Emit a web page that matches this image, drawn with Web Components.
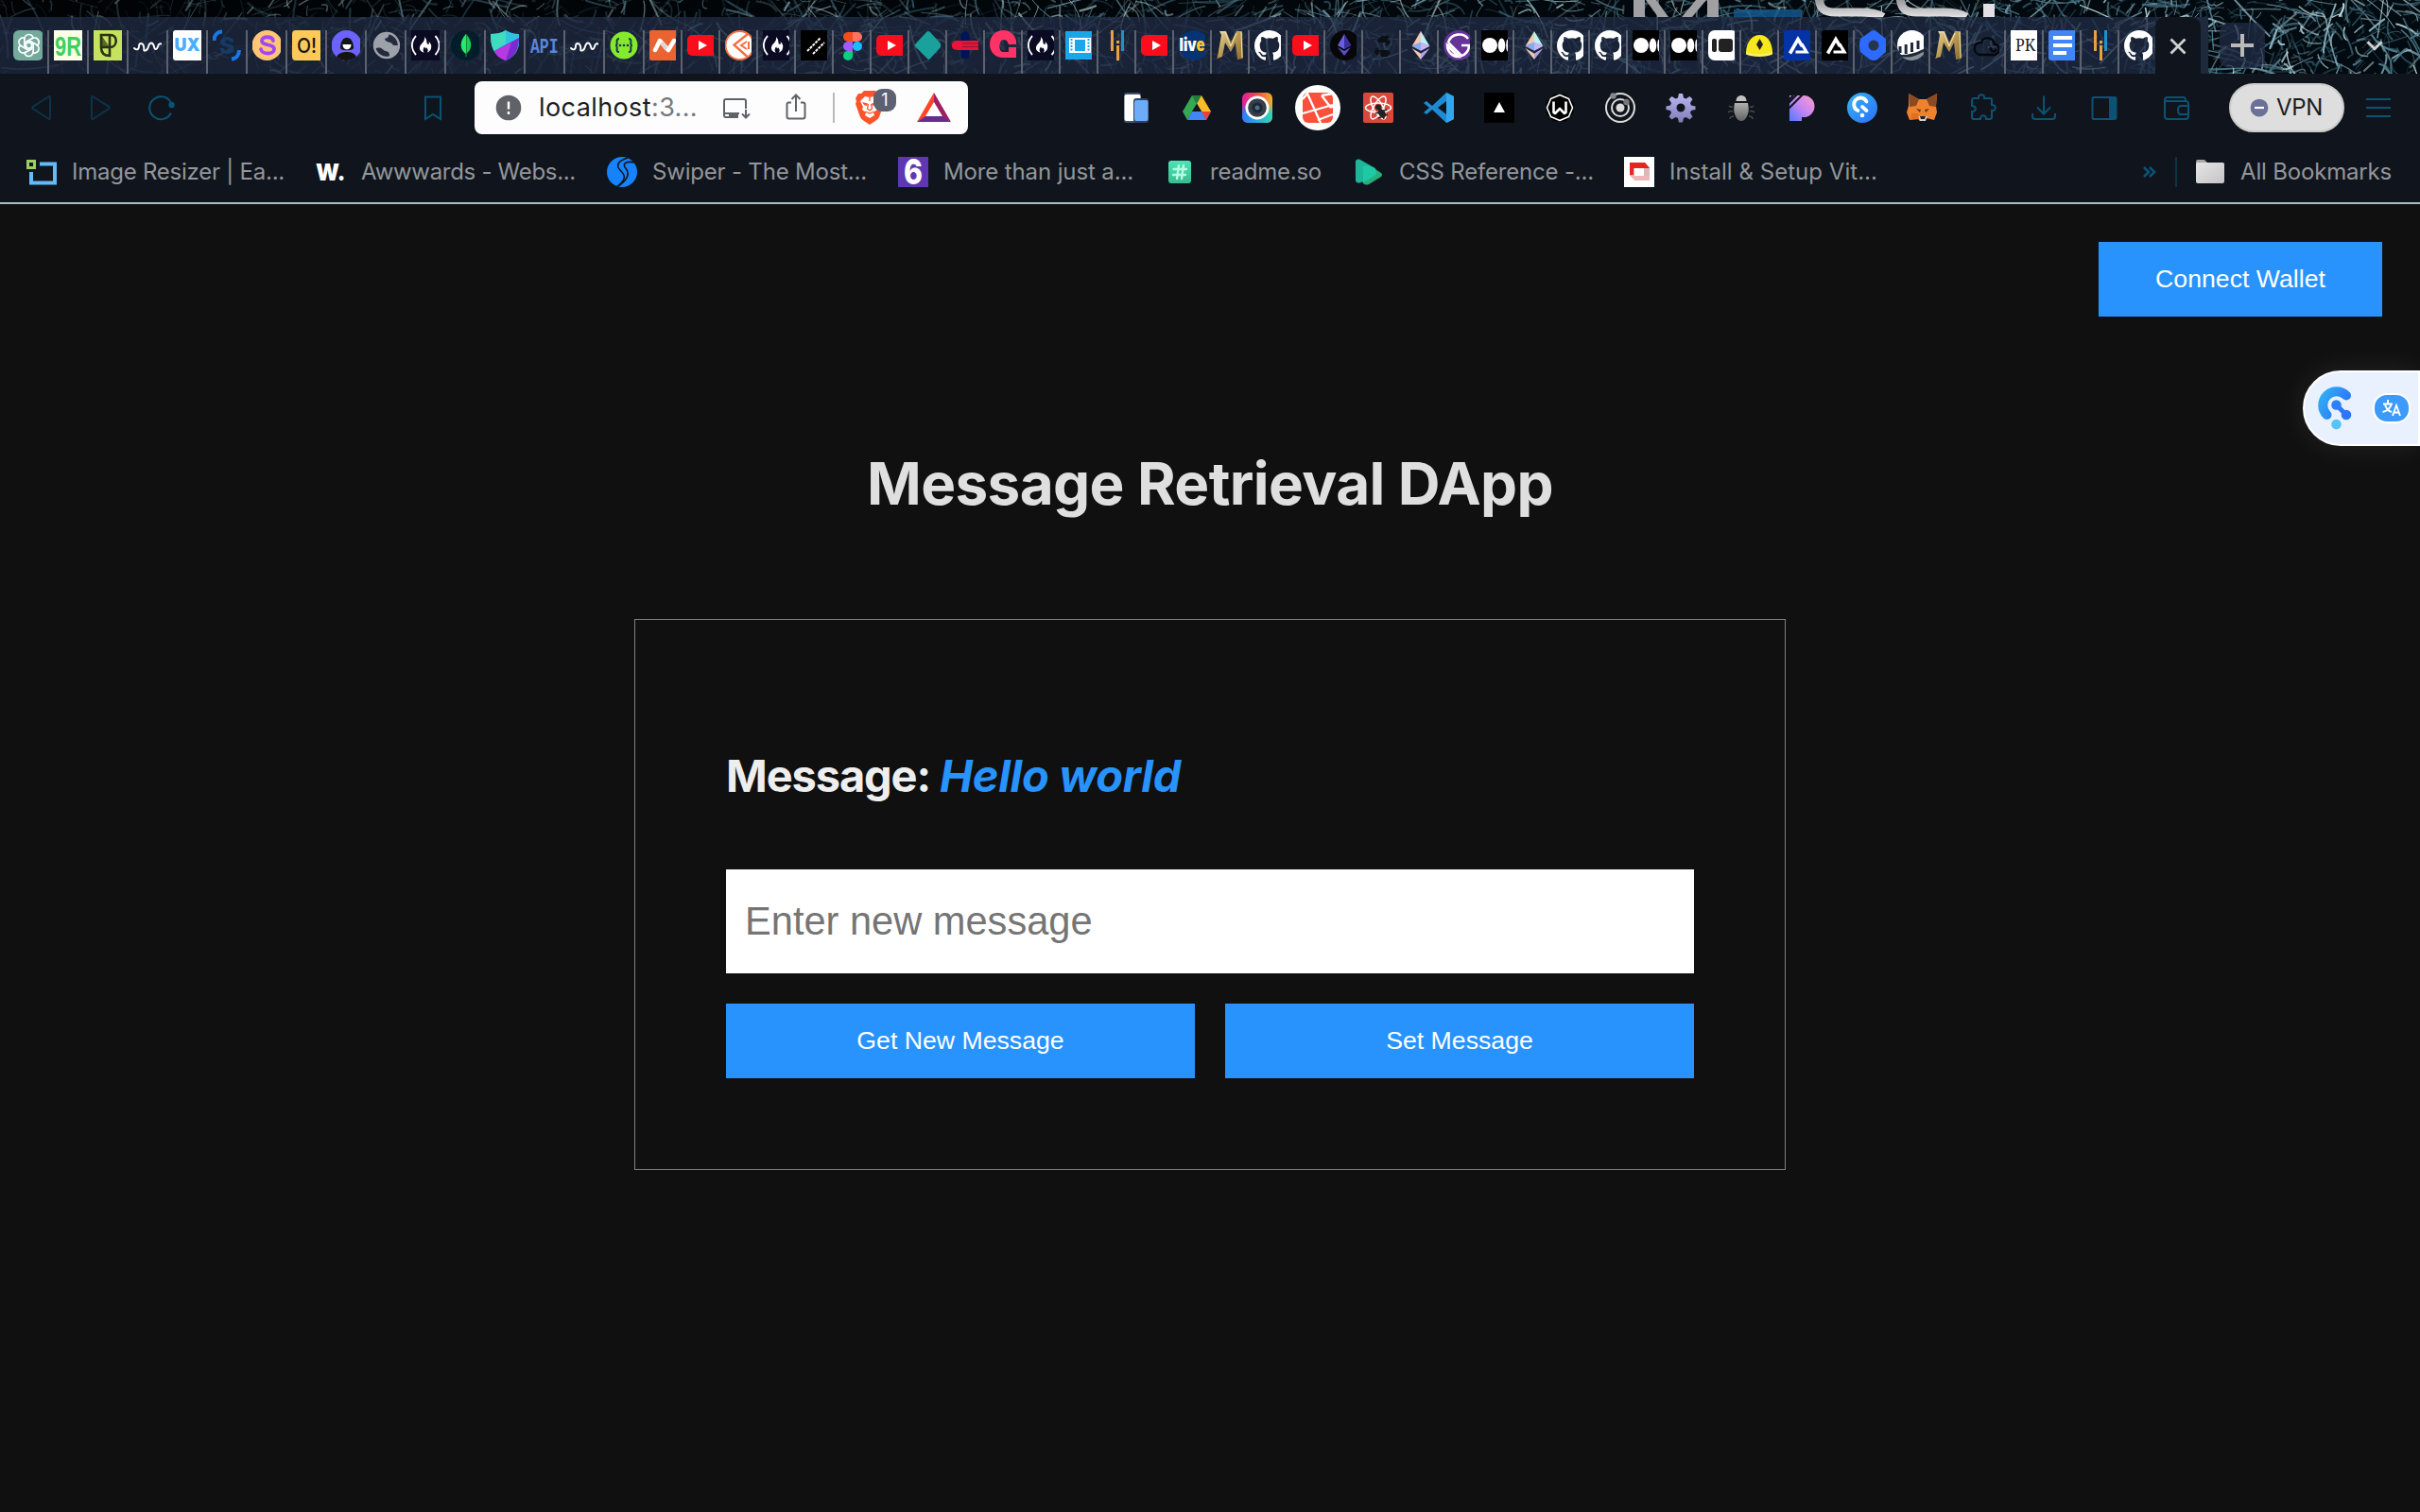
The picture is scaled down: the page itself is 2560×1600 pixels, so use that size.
<!DOCTYPE html>
<html lang="en">
<head>
<meta charset="utf-8">
<title>Message Retrieval DApp</title>
<style>
html,body{margin:0;padding:0;background:#101010;overflow:hidden}
body{width:2560px;height:1600px;font-family:Inter,"Liberation Sans",sans-serif}
</style>
</head>
<body>
<browser-window>
  <tab-strip slot="tabs"></tab-strip>
  <tool-bar slot="toolbar"></tool-bar>
  <bookmark-bar slot="bookmarks"></bookmark-bar>
  <dapp-page slot="page"></dapp-page>
</browser-window>
<script>
const yt='<rect x="0" y="5" width="32" height="22" rx="5" fill="#fb0d1b"/><path d="M12 11v10l9-5z" fill="#fff"/>';
const octo='<path fill="#fff" d="M16 0C7.200 0 0 7.200 0 16.300c0 7.200 4.600 13.300 10.900 15.500.8.1 1.100-.3 1.100-.8v-3c-4.400 1-5.400-1.900-5.400-1.900-.7-1.800-1.800-2.300-1.800-2.300-1.400-1 .1-1 .1-1 1.600.1 2.500 1.700 2.500 1.700 1.400 2.500 3.700 1.700 4.600 1.300.1-1 .6-1.700 1-2.100-3.500-.4-7.300-1.800-7.300-8 0-1.800.6-3.200 1.700-4.400-.2-.4-.7-2.100.2-4.300 0 0 1.300-.4 4.400 1.700a15 15 0 0 1 8 0c3.100-2.100 4.400-1.700 4.400-1.700.9 2.200.4 3.900.2 4.300 1 1.200 1.700 2.600 1.700 4.400 0 6.200-3.800 7.600-7.400 8 .6.500 1.100 1.500 1.100 3V31c0 .5.300.9 1.100.8A16.300 16.300 0 0 0 32 16.300C32 7.200 24.800 0 16 0z"/>';
const fcc='<rect width="32" height="32" fill="#0a0a23"/><path d="M5 6C-.5 12-.5 20 5 26M25.500 6c5.500 6 5.500 14 0 20" fill="none" stroke="#fff" stroke-width="1.900"/><path d="M14 7c4 4 1 7 4 8 1 .3 1-2 .6-3 3 3 3 5 2.300 7.500-.5 2-2 3.500-4.300 4.200 2-2 1-4-.7-5.700 0 2-1.700 1.600-1.500-.7-2 2-2.500 4.300-.7 6.400-3.600-.9-5.800-3.500-4.300-7C10.500 14 15 12 14 7z" fill="#fff"/>';
const wave='<path d="M1 19c2 2 5 2 5-2s4-4 5 0-1 5 2 4.500c4-.5 2-8 6-8s2 7 5 6.500 1-7 6-5.500" fill="none" stroke="#fff" stroke-width="1.900" stroke-linecap="round"/>';
const med='<rect width="32" height="32" rx="1" fill="#000"/><circle cx="9" cy="16" r="8" fill="#fff"/><ellipse cx="21.500" cy="16" rx="3.800" ry="7.600" fill="#fff"/><ellipse cx="28" cy="16" rx="1.800" ry="6.600" fill="#fff"/>';
const bars='<g stroke-width="3" fill="none"><path d="M9.500 0v22M15.500 11v3M15.500 16v16" stroke="#e9a041"/><path d="M20.500 0v22" stroke="#1c93c7"/></g>';
const goldM='<defs><linearGradient id="g" x2="1" y2="1"><stop stop-color="#e8d9a0"/><stop offset=".5" stop-color="#b99750"/><stop offset="1" stop-color="#8b6c34"/></linearGradient></defs><path d="M3 1h7l5 12 6-12h6l1 29-6 1-2-18-5 10-6-10-3 15-6 2 1-2L5 5z" fill="url(#g)"/><path d="M5 2h4l6 15M21 3l-6 14M26 2l1 27" stroke="#f2e6b8" stroke-width="1" fill="none"/>';
const eth='<path d="M16 1v12L6.500 17z" fill="#f0c9b4"/><path d="M16 1v12l9.500 4z" fill="#b8f3f3"/><path d="M6.500 17l9.500-4.500V22z" fill="#88aaf1"/><path d="M25.500 17L16 12.500V22z" fill="#c9b3f5"/><path d="M6.500 19l9.500 5.500V31z" fill="#f0c9b4"/><path d="M25.500 19L16 24.500V31z" fill="#b9a0ec"/><path d="M6.500 17l9.500 5 9.500-5L16 24.500z" fill="#22283c"/>';
const alch='<path d="M6.500 24.500L15 9.500l4.500 7.500" fill="none" stroke="#fff" stroke-width="3.600"/><path d="M19 14.500l5 8.500H12.500" fill="none" stroke="#fff" stroke-width="3.200"/>';
const T=(x,y,s,f,t,o='')=>`<text x="${x}" y="${y}" font-size="${s}" fill="${f}" ${o}>${t}</text>`;
const ICON={
gpt:'<rect width="32" height="32" rx="6" fill="#74aa9c"/><g fill="none" stroke="#fff" stroke-width="1.700">'+[0,60,120,180,240,300].map(a=>`<path transform="rotate(${a} 16.500 16)" d="M12 9.500c0-3 2-5 4.500-5s4 1.500 4.500 3.500l-7.500 4.300v6.500"/>`).join('')+'</g>',
nr:'<rect width="32" height="32" fill="#fbffe6"/>'+T(1,27,30,'#3fd05c','9R','font-family="Liberation Sans" font-weight="700" textLength="28" lengthAdjust="spacingAndGlyphs"'),
pd:'<rect width="32" height="32" fill="#c6e35f"/><path d="M8 5v13h9V5zM17 5c9-1 9 13 0 13M8 18c0 7 4 9 9 9V18" fill="none" stroke="#2b3215" stroke-width="2.600"/><path d="M8 5l9 13H8z" fill="#2b3215" opacity=".7"/>',
wave,
ux:'<rect width="32" height="32" rx="3" fill="#fff"/>'+T(1.500,22,19,'#4aaeff','UX','font-family="Inter" font-weight="900" textLength="27" lengthAdjust="spacingAndGlyphs"'),
scorn:T(7,25,25,'#153a66','S','font-family="Inter" font-weight="800"')+'<path d="M1.500 11C1.500 5 5 1.500 10 1.500M28 21c0 5-3 9-8 9.500" fill="none" stroke="#1778e6" stroke-width="4"/>',
spur:'<circle cx="15.500" cy="16" r="16" fill="#fdc676"/><path d="M22 11c-1-5-12-5-12 0 0 6 13 3 13 9 0 6-13 6-14 0" fill="none" stroke="#a447f2" stroke-width="3.800" stroke-linecap="round"/>',
oi:'<rect width="32" height="32" rx="4" fill="#fdc958"/>'+T(5,24,22,'#141414','O!','font-family="Inter" font-weight="500" textLength="21" lengthAdjust="spacingAndGlyphs"'),
ava:'<circle cx="15.500" cy="16" r="16" fill="#6b63fb"/><path d="M5 28c2-4 7-5 11-5s8 1 10 5a15.500 15.500 0 0 1-21 0z" fill="#141414"/><path d="M9 19c0-15 14-15 14 0-1 3-13 3-14 0z" fill="#141414"/><path d="M11.500 15h9c0 7-9 7-9 0z" fill="#fff"/>',
globe:'<circle cx="16" cy="16" r="13" fill="#232b3c" stroke="#9da1aa" stroke-width="2.500"/><path d="M4 12C8 4 14 3 18 4c1 3-1 4-4 5 0 4 8 3 9 7h5c0 6-4 11-9 12 0-4 0-5-4-6s-3-5-11-3z" fill="#9da1aa"/>',
fcc,
mongo:'<circle cx="16" cy="16" r="16" fill="#021e2b"/><path d="M16 4c7 8 7 16 0 21-7-5-7-13 0-21z" fill="#13d05b"/><path d="M16 4v24" stroke="#0a7a35" stroke-width="1.500"/><path d="M16 4c-7 8-7 16 0 21z" fill="#2be76c"/>',
shield:'<path d="M16 0C11 3 6 4 0 4c0 14 3 23 16 28C28 27 31 18 31 4 26 4 21 3 16 0z" fill="#2fc2e0"/><path d="M16 0C11 3 6 4 0 4c0 8 1 13 4 18L16 14z" fill="#3fdcc0"/><path d="M30 8c0 12-4 20-14 24C9 30 6 27 4 22z" fill="#7a2ad0"/><path d="M4 22c3 6 7 8 12 10l6-19z" fill="#b838e4"/>',
api:T(0,24,22,'#5a86de','API','font-family="Liberation Mono" font-weight="700" textLength="29.500" lengthAdjust="spacingAndGlyphs"'),
swag:'<circle cx="15" cy="16" r="14.500" fill="#85ea2d"/><path d="M10 9c-5 0 0 7-4 7 4 0-1 7 4 7M20 9c5 0 0 7 4 7-4 0 1 7-4 7" fill="none" stroke="#173647" stroke-width="2"/><g fill="#173647"><circle cx="11" cy="16" r="1.300"/><circle cx="15" cy="16" r="1.300"/><circle cx="19" cy="16" r="1.300"/></g>',
namec:'<rect width="32" height="32" rx="2" fill="#ea6331"/><path d="M6 21l5-10 9 10 6-10" fill="none" stroke="#fff" stroke-width="4.500" stroke-linejoin="round" stroke-linecap="round"/><path d="M13 13l5 7" stroke="#d9d9d9" stroke-width="4"/>',
yt,
post:'<circle cx="15.500" cy="16" r="15" fill="#fff" stroke="#f2703f" stroke-width="2"/><path d="M24 4L9.500 15.500l14 12.500" fill="none" stroke="#f2703f" stroke-width="2.400"/><path d="M23 12l-6 4 6 4" fill="none" stroke="#f2703f" stroke-width="2"/><path d="M25 12v8" stroke="#f2703f" stroke-width="2"/>',
slash:'<rect width="32" height="32" fill="#000"/><path d="M7 22L21 8M13 25L25 13" stroke="#fff" stroke-width="2" stroke-dasharray="3 1"/>',
figma:'<path d="M15 2h-5a5 5 0 0 0 0 10h5z" fill="#f24e1e"/><path d="M15 2h5a5 5 0 0 1 0 10h-5z" fill="#ff7262"/><path d="M15 12h-5a5 5 0 0 0 0 10h5z" fill="#a259ff"/><circle cx="20" cy="17" r="5" fill="#1abcfe"/><path d="M10 22h5v5a5 5 0 1 1-5-5z" fill="#0acf83"/>',
dia:'<path d="M15 1q1 0 2 1l12 13q1 1 0 2L17 30q-2 2-3 0L1 17q-1-1 0-2L13 2q1-1 2-1z" fill="#1aa19c"/>',
airt:'<path d="M9.500 6c0-6 9-6 9 0v20c0 6-9 6-9 0z" fill="#021459"/><path d="M5 11h25v10H5c-7 0-7-10 0-10z" fill="#e8143c"/><path d="M11 14h19M11 17.500h19" stroke="#8e1038" stroke-width="1.200"/>',
pink:'<path d="M28 11C26 4 21 0 15 0 5 0 0 7 0 15s6 14 14 14h18V18H20v5h-6c-5 0-5-13 1-13 4 0 4 4 5 5h12v-4z" fill="#ff3366"/>',
film:'<rect y="1" width="30" height="30" fill="#1ba5ea"/><rect x="4" y="8" width="23" height="16" fill="#fff"/><rect x="10" y="10" width="11" height="12" fill="#1ba5ea"/><path d="M6.500 9v14M24.500 9v14" stroke="#1ba5ea" stroke-width="2" stroke-dasharray="2 1.500"/>',
bars,
live:'<circle cx="16" cy="16" r="16" fill="#063374"/>'+T(.5,22,19,'#fff','liv<tspan fill="#ffc72c">e</tspan>','font-family="Inter" font-weight="900" textLength="27" lengthAdjust="spacingAndGlyphs"'),
goldM,octo,
ethd:'<circle cx="16" cy="16" r="16" fill="#070709"/><path d="M15 4l7 12-7 4-7-4z" fill="#6a5fe0"/><path d="M15 4v16l7-4z" fill="#3b2f9c"/><path d="M8 18l7 4 7-4-7 9z" fill="#5a50c8"/>',
sol:'<path d="M10 10l5-4h8l-4 7h-7zM19 12l3-2 2 3-4 4zM9 18l3 4-2 5-3-4zM12 21h9l3 3-4 4h-6z" fill="#0c0f14"/>',
eth,
gatsby:'<circle cx="16" cy="16" r="16" fill="#663399"/><path d="M4 16a12 12 0 0 0 12 12zM5 13l14 14c4-1 8-5 8-11h-8M26 9C21 2 8 3 5 13" fill="none" stroke="#fff" stroke-width="2.600"/>',
med,
wbox:'<rect width="32" height="32" rx="7" fill="#fff"/><rect x="4" y="9" width="5" height="14" rx="2" fill="#222"/><rect x="11" y="9" width="15" height="14" rx="3" fill="#222"/>',
helm:'<path d="M0 24C0 12 7 5 14.500 5S28 12 28 24c-6 3.500-22 3.500-28 0z" fill="#f7e81e"/><path d="M0 24c6 3.500 22 3.500 28 0" stroke="#fff06a" stroke-width="2.500" fill="none"/><path d="M14.500 9l3.500 6-3.500 6-3.500-6z" fill="#222"/>',
alb:'<rect width="32" height="32" rx="2" fill="#0433a5"/>'+alch,
alk:'<rect width="32" height="32" rx="2" fill="#000"/>'+alch,
hex:'<path d="M11 2q4-4 8 0l9 7q2 2 0 14l-9 8q-4 2-8 0L1 23q-2-7 0-14z" fill="#2d6bff"/><circle cx="15" cy="16" r="5.500" fill="#273450"/>',
mm:'<circle cx="15.500" cy="15.500" r="15.500" fill="#fff"/><path d="M3 17v7M9.200 15v10M15.500 13v10M22 11v9" stroke="#20293b" stroke-width="3"/><path d="M1 26q16 1 30-8-2 12-15.500 13.500Q5 31 1 26z" fill="#20293b"/><path d="M5 28c9 2 17-1 25-7-3 10-16 15-25 7z" fill="#8a8f96"/>',
cloud:'<path d="M24 25c6-1 5-10-1-10-1-8-12-9-14-2-10 0-9 12-1 13h17M19 18c-1 5 5 6 6 2" fill="none" stroke="#05070b" stroke-width="2.300"/>',
pk:'<rect width="32" height="32" fill="#fff"/>'+T(5,22,18,'#222','PK','font-family="Noto Serif,Liberation Serif" textLength="21" lengthAdjust="spacingAndGlyphs"'),
docs:'<rect width="32" height="32" rx="3" fill="#4285f4"/><path d="M5 8h20M5 16h20M5 24h14" stroke="#fff" stroke-width="4"/>',
/* toolbar */
back:'<path d="M24 4.500q2-1.500 2 1v21q0 2.500-2 1L8 17.200q-1.500-1.200 0-2.400z" fill="none" stroke="#0d3347" stroke-width="2"/>',
fwd:'<path d="M8 4.500q-2-1.500-2 1v21q0 2.500 2 1l16-10.300q1.500-1.200 0-2.400z" fill="none" stroke="#0d3347" stroke-width="2"/>',
reload:'<path d="M26 21.500A12 12 0 1 1 25.500 10" fill="none" stroke="#0b5273" stroke-width="2"/><circle cx="26.500" cy="13" r="3.200" fill="#0b5273"/>',
bmk:'<path d="M8 4.500h16V28l-8-5-8 5z" fill="none" stroke="#0b5273" stroke-width="2"/>',
info:'<circle cx="16" cy="16" r="13.300" fill="#5f6368"/><path d="M16 9.500v8M16 20v3" stroke="#fff" stroke-width="2.400"/>',
inst:'<path d="M27 17V9q0-2-2-2H6q-2 0-2 2v15q0 2 2 2h13M4 22h16" fill="none" stroke="#5f6368" stroke-width="2"/><path d="M10 22v2h9M27 18v8M23 22.500l4 4 4-4" fill="none" stroke="#5f6368" stroke-width="2"/>',
share:'<path d="M11 10.500H8.500Q6.500 10.500 6.500 12.500v13q0 2 2 2h15q2 0 2-2v-13q0-2-2-2H21M16 20V2.500M11.500 7L16 2.500 20.500 7" fill="none" stroke="#5f6368" stroke-width="2"/>',
brave:'<path d="M9 0h12l3 3h3l3 5-1 3 1 3-5 14q-1 2-4 4l-6 4-6-4q-3-2-4-4L0 14l1-3-1-3 3-5h3z" fill="#fb542b"/><path d="M10 6l5 1 5-1 5 5-3 6 1 3-4 3 1 3-5 3-5-3 1-3-4-3 1-3-3-6z" fill="#fff"/><path d="M7 12l6 1.500-1 2.500-3-1zM23 12l-6 1.500 1 2.500 3-1z" fill="#fb542b"/><path d="M15 7v4M13.500 14l-1 5 2.500 2 2.500-2-1-5M10 22l5 2 5-2" fill="none" stroke="#fb542b" stroke-width="1.300"/>',
bat:'<path d="M18 0v11L9 26 0 31z" fill="#ff4724"/><path d="M18 0v11l9 15 9 5z" fill="#9e1f63"/><path d="M0 31l9-6h18l9 6z" fill="#662d91"/><path d="M18 10l9 15H9z" fill="#fff"/>',
phones:'<rect x="3" y="0" width="18" height="32" rx="3" fill="#41506b"/><rect x="3.500" y="2" width="17" height="28" rx="2" fill="#fff"/><rect x="13" y="6" width="16" height="26" rx="3" fill="#33415c"/><rect x="14" y="8" width="14.500" height="22" rx="2" fill="#6cacf9"/>',
drive:'<path d="M11 3h10l10 17H21z" fill="#fbbc2c"/><path d="M11 3L1 20l5 9 10-17z" fill="#35a853"/><path d="M11 3h10l-5 9z" fill="#1c7d3d"/><path d="M6 29h20l5-9H11z" fill="#4285f4"/><path d="M31 20H21l5 9z" fill="#ea4335"/><path d="M16 12l-5 8h10z" fill="#10151d"/>',
cam:'<defs><linearGradient id="h" x1="0" x2="1"><stop stop-color="#e0209e"/><stop offset=".5" stop-color="#ee4a4a"/><stop offset="1" stop-color="#f3b02c"/></linearGradient><linearGradient id="g" x1="0" x2="1"><stop stop-color="#2e7bf6"/><stop offset="1" stop-color="#2fd8b4"/></linearGradient><linearGradient id="k" x2="0" y2="1"><stop offset=".35" stop-color="#fff" stop-opacity="0"/><stop offset=".7" stop-color="#fff"/></linearGradient><mask id="m"><rect width="32" height="32" fill="url(#k)"/></mask></defs><rect width="32" height="32" rx="6" fill="url(#h)"/><rect width="32" height="32" rx="6" fill="url(#g)" mask="url(#m)"/><circle cx="16" cy="16" r="12.500" fill="#fff"/><circle cx="16" cy="16" r="9.800" fill="#363f4a"/><circle cx="16" cy="16" r="5.500" fill="#1d2731"/><circle cx="16" cy="16" r="2.500" fill="#46718f"/>',
lara:'<circle cx="24" cy="24" r="24" fill="#fff"/><rect x="8" y="8" width="32" height="32" rx="6" fill="#fb503b"/><path d="M8 15l5-6 14 31M8 30l32-9M28 11l10 13M28 11l12-2M38 24l2-2M24 37l16-6" stroke="#fff" stroke-width="2.300" fill="none"/>',
rbug:'<rect width="32" height="32" rx="2" fill="#d9483b"/><g fill="none" stroke="#fff" stroke-width="1.500"><ellipse cx="16" cy="16" rx="13.500" ry="5"/><ellipse cx="16" cy="16" rx="13.500" ry="5" transform="rotate(60 16 16)"/><ellipse cx="16" cy="16" rx="13.500" ry="5" transform="rotate(120 16 16)"/></g><circle cx="16" cy="15.500" r="3" fill="#222"/><ellipse cx="20" cy="22" rx="3.500" ry="5" transform="rotate(-40 20 22)" fill="#222"/><path d="M13 22l12-4M16 27l10-4M22 28l-4-11" stroke="#222" stroke-width="1.500"/>',
vsc:'<path d="M24 0l8 4v24l-8 4L9 18l-6 5-3-2 6-5-6-5 3-2 6 5z" fill="#1f8ad2"/><path d="M24 0l8 4v24l-8 4z" fill="#2fa7f2"/><path d="M24 9v14l-9-7z" fill="#10151d"/>',
tri:'<rect width="32" height="32" fill="#000"/><path d="M16 10l6 11H10z" fill="#fff"/>',
wc:'<path d="M10 1.500h12l8.500 8.500v12L22 30.500H10L1.500 22V10z" fill="#000"/><path d="M16 2.500l9.500 4L29.500 16l-4 9.500-9.500 4-9.500-4L2.500 16l4-9.500z" fill="#000" stroke="#fff" stroke-width="1.600" stroke-linejoin="round"/><path d="M9.500 9.500V21l1.500 1 5-5 5 5 1.500-1V9.500" fill="none" stroke="#fff" stroke-width="2.600" stroke-linejoin="round"/>',
orbit:'<circle cx="16" cy="16" r="15" fill="none" stroke="#dcdcdc" stroke-width="2"/><circle cx="16" cy="16" r="9" fill="none" stroke="#dcdcdc" stroke-width="2"/><circle cx="16" cy="16" r="4.500" fill="#dcdcdc"/><circle cx="8.500" cy="3.500" r="3.200" fill="#888"/><circle cx="22.500" cy="10" r="3.200" fill="#777"/>',
gear:'<defs><linearGradient id="g" x2="0" y2="32" gradientUnits="userSpaceOnUse"><stop stop-color="#bdb8f5"/><stop offset="1" stop-color="#7d7db5"/></linearGradient></defs><path fill="url(#g)" fill-rule="evenodd" d="M14 1h4l1 4.500 2.500 1L25.500 4l3 3-2.500 4 1 2.500 4.500 1v3.500l-4.500 1-1 2.500 2.500 4-3 3-4-2.500-2.500 1-1 4.500h-4l-1-4.500-2.500-1-4 2.500-3-3 2.500-4-1-2.500-4.500-1v-3.500l4.500-1 1-2.500-2.500-4 3-3 4 2.500 2.500-1zM16 11.500a4.500 4.500 0 1 0 0 9 4.500 4.500 0 1 0 0-9z"/>',
bug:'<path d="M10.500 9c0-8 11-8 11 0z" fill="#c2c2c2"/><defs><linearGradient id="g" x2="0" y2="1"><stop stop-color="#b0b0b0"/><stop offset="1" stop-color="#626262"/></linearGradient></defs><path d="M9 11h14q2 9-1 14-2 5-6 5t-6-5q-3-5-1-14z" fill="url(#g)"/><path d="M7 15c-2 1-3 0-4-1M7 20c-2-1-4 0-5 1M8 25c-3 0-4 2-4 3M25 15c2 1 3 0 4-1M25 20c2-1 4 0 5 1M24 25c3 0 4 2 4 3" stroke="#4a4a4a" stroke-width="1.500" fill="none"/>',
pp:'<defs><linearGradient id="g" x1="1" x2="0" y2="1"><stop stop-color="#ff9ecb"/><stop offset=".5" stop-color="#c585f2"/><stop offset="1" stop-color="#4e7bff"/></linearGradient></defs><path d="M3 3h15a11.500 11.500 0 0 1 0 23h-2v4H3z" fill="url(#g)"/><path d="M2 11l9-9M2 17L17 2M2 8l5-5" stroke="#10151d" stroke-width="2"/>',
glogo:'<defs><linearGradient id="g" x2="1" y2="1"><stop stop-color="#35b5f5"/><stop offset="1" stop-color="#2b6ff8"/></linearGradient></defs><circle cx="16" cy="16" r="16" fill="url(#g)"/><path d="M20.500 9.500A7 7 0 1 0 11.500 19M16 15l4.500 4" fill="none" stroke="#fff" stroke-width="3.800" stroke-linecap="round"/><circle cx="16" cy="24" r="2.300" fill="#fff"/>',
fox:'<path d="M1 1l11 6h8l11-6-1 13 1 7-3 8-8-2-3 3h-4l-3-3-8 2-3-8 2-7z" fill="#f0822c"/><path d="M1 1l11 6-3 7-7 1zM31 1L20 7l3 7 7 1z" fill="#8c4a23"/><path d="M9 17l5 1-1 3zM23 17l-5 1 1 3z" fill="#5a3a2a"/><path d="M11 25h10l-2 5h-6z" fill="#d8cfc8"/><path d="M13 25h6l-1 3h-4z" fill="#222"/><path d="M4 22l7 0 1 6-9 1z" fill="#e2701f"/>',
puz:'<path d="M4 8q0-2 2-2h5c-1-5 7-5 6 0h6q2 0 2 2v5c5-1 5 7 0 6v7q0 2-2 2h-4c0-5-6-5-6 0H6q-2 0-2-2v-6c5 0 5-6 0-6z" fill="none" stroke="#0b5273" stroke-width="2"/>',
down:'<path d="M16 3.500v19M9 15.500l7 7 7-7M4 22v3q0 3 3 3h18q3 0 3-3v-3" fill="none" stroke="#0b5273" stroke-width="2"/>',
side:'<rect x="3.500" y="5" width="25" height="23" rx="1.500" fill="none" stroke="#0b5273" stroke-width="2"/><path d="M21 5h8v23h-8z" fill="#0b5273"/>',
wal:'<path d="M4 8v17q0 3 3 3h19q3 0 3-3V12q0-3-3-3H6q-2-1-2-2t2-2h18q2 0 2 4M29 14h-8q-3 0-3 4.500t3 4.500h8" fill="none" stroke="#0b5273" stroke-width="2"/>',
vpn:'<circle cx="16" cy="16" r="15" fill="#6b7196"/><path d="M8 16h16" stroke="#fff" stroke-width="3.500"/>',
menu:'<path d="M3 7h26M3 16h26M3 25h26" stroke="#0b5273" stroke-width="2"/>',
/* bookmarks */
resz:'<path d="M14 7.500h16v20H5V16" fill="none" stroke="#64baf6" stroke-width="4"/><rect x="1.500" y="4.500" width="7" height="7" fill="#10151d" stroke="#9ccf63" stroke-width="3"/>',
aw:T(0,24.500,25,'#fff','W.','font-family="Inter" font-weight="900" textLength="31.500" lengthAdjust="spacingAndGlyphs"'),
swip:'<circle cx="16" cy="16" r="16" fill="#1682fb"/><path d="M22 1C12 4 9 9 14 14s8 9-4 18M30 6C20 4 17 7 19 11c5 5 5 12-7 20" fill="none" stroke="#10151d" stroke-width="1.600"/>',
six:'<rect width="32" height="32" fill="#5f37b3"/>'+T(6,29,37,'#fff','6','font-family="Inter" font-weight="800" textLength="20" lengthAdjust="spacingAndGlyphs"'),
readme:'<defs><linearGradient id="g" x2="0" y2="1"><stop stop-color="#4fe3b8"/><stop offset="1" stop-color="#35bd8e"/></linearGradient></defs><rect x="4" y="4" width="24" height="24" rx="3" fill="url(#g)"/><path d="M9.500 13h13.500M9 19h13M15 9l-2 14M20 9l-2 14" stroke="#b5ffe3" stroke-width="2.400" stroke-linecap="round"/>',
cssr:'<path d="M2 5q0-3 4-2.500l16 9q3 2 0 5L8 27q-6 2-6-3z" fill="#1fb59a"/><path d="M15 8l14 9q2 2 0 4l-13 8q-5 2-7-3z" fill="#24b07c"/><path d="M10 10q5-2 12 2 4 4 0 8L10 27z" fill="#20c9a6"/>',
inst2:'<rect width="32" height="32" fill="#fff"/><path d="M6 6h16l5 5v14H12l-6-6z" fill="#d9b8b4"/><path d="M6 6h16l5 6H10v11l-4-4z" fill="#e3261f"/><path d="M6 19l5 6h16v-5z" fill="#efb6b8"/><rect x="11" y="12" width="10" height="8" fill="#fff"/>',
fold:'<defs><linearGradient id="g" x2="1" y2="1"><stop stop-color="#e6e6e6"/><stop offset="1" stop-color="#c4c4c4"/></linearGradient></defs><path d="M1 5q0-2 2-2h7l3 3h15q3 0 3 3v4H1z" fill="#aaa5a8"/><path d="M1 8q0-2 2-2h26q2 0 2 2v18q0 2-2 2H3q-2 0-2-2z" fill="url(#g)"/>',
raq:'<path d="M7 2l5 5-5 5M13 2l5 5-5 5" fill="none" stroke="#0b5273" stroke-width="2.600"/>',
plus:'<path d="M16 4v24M4 16h24" stroke="#b9b9b9" stroke-width="4"/>',
x:'<path d="M8.500 8.500l15 15M23.500 8.500l-15 15" stroke="#d2d2d2" stroke-width="2.800"/>',
chev:'<path d="M8 12l8 8 8-8" fill="none" stroke="#d2d2d2" stroke-width="3"/>',
widget:'<defs><linearGradient id="g" x2="1" y2=".6"><stop stop-color="#30aef4"/><stop offset="1" stop-color="#2c76f9"/></linearGradient></defs><path d="M30.500 9.500A14 14 0 1 0 10 30" fill="none" stroke="url(#g)" stroke-width="10" stroke-linecap="round"/><path d="M20 19.500L30.500 30" stroke="#2c76f9" stroke-width="5"/><circle cx="20" cy="19.500" r="5.300" fill="#2c80f8"/><circle cx="30.500" cy="30" r="5.300" fill="#2c76f9"/><circle cx="20" cy="40" r="5.300" fill="#56c4f8"/>',
trans:'<rect x="1" y="1" width="38" height="30" rx="14" fill="#3c9afa" stroke="#fff" stroke-width="2"/><path d="M11 11.500h10M16 7v4M13 12c1 4 4 7 7 8M19.500 12c-1 4-4 7-9 8" fill="none" stroke="#fff" stroke-width="1.900"/><path d="M21 24l4-11 4 11M22.500 20.500h5" fill="none" stroke="#fff" stroke-width="1.900"/>'
};
function make(tag,html,after){
  customElements.define(tag,class extends HTMLElement{
    connectedCallback(){
      if(this.shadowRoot)return;
      const t=document.createElement('template');
      t.innerHTML=typeof html==='function'?html(this):html;
      this.attachShadow({mode:'open'}).appendChild(t.content.cloneNode(true));
      if(after)after(this);
    }
  });
}
make('svg-icon',e=>{
  const w=+e.getAttribute('w')||32,h=+e.getAttribute('h')||w,vb=e.getAttribute('vb')||'0 0 32 32';
  return `<style>:host{display:block;flex:none;width:${w}px;height:${h}px}svg{display:block;overflow:visible}</style><svg width="${w}" height="${h}" viewBox="${vb}">${ICON[e.getAttribute('name')]}</svg>`;
});
/* A single line of text, tracked so that it fills the given width. */
make('fit-text',e=>`<style>:host{display:block;flex:none;white-space:pre;width:${e.getAttribute('w')}px}span{display:inline-block}</style><span><slot></slot></span>`,e=>{
  const s=e.shadowRoot.querySelector('span'),n=e.textContent.length;
  s.style.letterSpacing=((+e.getAttribute('w')-s.getBoundingClientRect().width)/n)+'px';
});
/* Crackled-ice desktop background, brighter towards the right. */
make('wall-paper',()=>{
  let seed=7;const r=()=>(seed=(seed*16807)%2147483647)/2147483647;
  let p='';
  for(let i=0;i<2700;i++){
    const x=Math.pow(r(),.85)*2620-30,y=r()*96-9,a=r()*6.283,l=8+r()*r()*62,b=(r()-.5)*14;
    const k=Math.max(0,x/2560),x2=x+Math.cos(a)*l,y2=y+Math.sin(a)*l;
    const c=['#8fb6c2','#4d7c8e','#2f5768','#bcdbe0','#3d6678'][Math.floor(r()*5)];
    p+=`<path d="M${x.toFixed(1)} ${y.toFixed(1)}Q${((x+x2)/2+b).toFixed(1)} ${((y+y2)/2-b).toFixed(1)} ${x2.toFixed(1)} ${y2.toFixed(1)}" stroke="${c}" stroke-width="${(.8+r()*1.5).toFixed(1)}" opacity="${Math.min(1,(.3+.5*k)*(.3+r())).toFixed(2)}"/>`;
  }
  return `<style>:host{display:block}svg{display:block}</style><svg width="2560" height="78"><defs><linearGradient id="b"><stop stop-color="#010305"/><stop offset="1" stop-color="#020b11"/></linearGradient><linearGradient id="s" x1="0" y1="-8" x2="0" y2="18" gradientUnits="userSpaceOnUse"><stop stop-color="#77787b"/><stop offset="1" stop-color="#e2e2e4"/></linearGradient></defs><rect width="2560" height="78" fill="url(#b)"/><g fill="none">${p}</g>
  <path d="M1728 0h12v18h-12zM1806 0h12v18h-12zM1741 0h11l13 18h-11zM1794 0h11l-15 18h-11z" fill="#a0a0a3"/>
  <rect x="1834" y="10" width="72" height="8" fill="#14568a" opacity=".85"/>
  <path d="M1924 -6c0 16 6 19 18 19h26q16 0 24 5M2010 -6c0 16 6 19 18 19h28q16 0 24 5" fill="none" stroke="url(#s)" stroke-width="9"/>
  <rect x="2098" y="4" width="12" height="14" fill="#e3dfe6"/></svg>`;
});
make('browser-tab',e=>{
  const w=+e.getAttribute('w'),pl=+e.getAttribute('pad'),c=+e.getAttribute('clip'),last=e.hasAttribute('last');
  return `<style>:host{display:flex;flex:none;box-sizing:border-box;width:${w}px;height:46px;margin-top:14px;padding-left:${pl}px;${last?'':'border-right:2px solid #5d626e;'}}div{width:${c}px;height:32px;overflow-x:clip;overflow-y:visible}</style><div><svg-icon name="${e.getAttribute('icon')}"></svg-icon></div>`;
});
const wide='nr pd wave ux scorn spur oi ava globe fcc mongo shield api wave swag'.split(' ');
const slim='namec yt post fcc slash figma yt dia airt pink fcc film bars yt live goldM octo yt ethd sol eth gatsby med eth octo octo med med wbox helm alb alk hex mm goldM cloud pk docs bars'.split(' ');
make('tab-strip',()=>`<style>
:host{display:grid;height:78px;width:2560px;overflow:hidden}
wall-paper,.row{grid-area:1/1}
.row{display:flex;align-items:flex-end;z-index:1}
.tabs{display:flex;height:60px;width:2336px;background:rgba(33,44,69,.76)}
.active{width:48px;height:60px;background:#10151d;border-radius:10px 10px 0 0;display:flex;justify-content:center;padding-top:20px;box-sizing:border-box}
.edge{width:8px;height:60px;background:#1f293c}
.plus{width:48px;height:48px;margin:0 0 6px 12px;border-radius:10px;background:rgba(33,44,69,.76);display:grid;place-items:center}
.chev{margin:0 0 19px 101px}
</style><wall-paper></wall-paper><div class="row"><div class="tabs"><browser-tab icon="gpt" w="52" pad="14" clip="31"></browser-tab>${wide.map(n=>`<browser-tab icon="${n}" w="42" pad="5" clip="30"></browser-tab>`).join('')}${slim.map(n=>`<browser-tab icon="${n}" w="40" pad="5" clip="28"></browser-tab>`).join('')}<browser-tab icon="octo" w="38" pad="5" clip="30" last></browser-tab><div class="active"><svg-icon name="x" w="32" h="22" vb="0 5 32 22"></svg-icon></div><div class="edge"></div></div><div class="plus"><svg-icon name="plus"></svg-icon></div><svg-icon class="chev" name="chev" w="30" h="22" vb="0 5 32 22"></svg-icon></div>`);
make('address-bar',`<style>
:host{display:flex;align-items:center;flex:none;box-sizing:border-box;width:522px;height:56px;border-radius:8px;background:#fdfdfd;padding-left:20px;font:27px/34px Inter,sans-serif;color:#1c1e21}
.u{display:flex;margin-left:16px;width:192px}.u fit-text+fit-text{color:#75787c}
.d{width:2px;height:32px;background:#b6b9bd;margin-left:23px}
.br{position:relative;margin-left:22px;width:44px;height:36px}
.n{position:absolute;left:19px;top:-2px;width:24px;height:24px;border-radius:9px;background:#5d6070;color:#fff;font:18px/24px Inter;text-align:center}
</style><svg-icon name="info"></svg-icon><div class="u"><fit-text w="119">localhost</fit-text><fit-text w="49">:3...</fit-text></div><svg-icon name="inst"></svg-icon><svg-icon name="share" style="margin-left:32px"></svg-icon><div class="d"></div><div class="br"><svg-icon name="brave" w="30" h="36" vb="0 0 30 36"></svg-icon><div class="n">1</div></div><svg-icon name="bat" w="36" h="32" vb="0 0 36 32" style="margin-left:21px"></svg-icon>`);
make('tool-bar',`<style>
:host{display:flex;align-items:center;height:72px;width:2560px;background:#10151d;box-sizing:border-box;padding-left:11px}
.s{width:64px;flex:none;display:grid;place-items:center}
.v{box-sizing:border-box;width:122px;height:52px;border-radius:26px;background:#dedede;border:2px solid #cbcbcb;display:flex;align-items:center;padding-left:20px;gap:8px;font:24px/30px Inter;color:#1a1c20;margin-left:24px}
</style>
<div class="s"><svg-icon name="back"></svg-icon></div><div class="s"><svg-icon name="fwd"></svg-icon></div><div class="s"><svg-icon name="reload"></svg-icon></div>
<svg-icon name="bmk" style="margin-left:239px"></svg-icon><address-bar style="margin:0 146px 0 28px"></address-bar>
${'phones drive cam lara rbug vsc tri wc orbit gear bug pp glogo fox puz down side'.split(' ').map(n=>`<div class="s">${n=='lara'?'<svg-icon name="lara" w="48" vb="0 0 48 48"></svg-icon>':`<svg-icon name="${n}"></svg-icon>`}</div>`).join('')}
<div class="s" style="margin-left:12px"><svg-icon name="wal"></svg-icon></div>
<div class="v"><svg-icon name="vpn" w="20"></svg-icon><fit-text w="49">VPN</fit-text></div><svg-icon name="menu" style="margin-left:20px"></svg-icon>`);
make('bookmark-item',e=>`<style>:host{display:flex;flex:none;align-items:center;gap:16px;font:24px/32px Inter,sans-serif;color:#93969b}</style><svg-icon name="${e.getAttribute('icon')}"></svg-icon><fit-text w="${e.getAttribute('w')}">${e.getAttribute('label')}</fit-text>`);
const marks=[['resz','Image Resizer | Ea...',225,33],['aw','Awwwards - Webs...',227,33],['swip','Swiper - The Most...',227,33],['six','More than just a...',201,33],['readme','readme.so',118,34],['cssr','CSS Reference -...',206,32],['inst2','Install & Setup Vit...',220,0]];
make('bookmark-bar',`<style>
:host{display:flex;align-items:center;height:66px;width:2560px;box-sizing:border-box;background:#10151d;border-bottom:2px solid #a9bec4;padding:0 0 0 28px}
.f{margin-left:auto;display:flex;align-items:center;padding-right:30px}
.d{width:2px;height:32px;background:#0d3447;margin:0 19px 0 18px}
</style>${marks.map(m=>`<bookmark-item icon="${m[0]}" label="${m[1].replace('&','&amp;')}" w="${m[2]}" style="margin-right:${m[3]}px"></bookmark-item>`).join('')}
<div class="f"><svg-icon name="raq" w="20" h="14" vb="2 0 20 14"></svg-icon><div class="d"></div><bookmark-item icon="fold" label="All Bookmarks" w="160"></bookmark-item></div>`);
make('dapp-button',`<style>:host{display:block}button{display:block;width:100%;height:79px;border:0;border-radius:0;margin:0;padding:0 0 1px;background:#2893fd;color:#fff;font:26.667px/30px "Liberation Sans",Arial,sans-serif}</style><button><slot></slot></button>`);
make('message-card',`<style>
:host{display:block;box-sizing:border-box;width:1218px;height:583px;border:1px solid #808080;padding:133px 96px 0}
h2{margin:0;display:flex;font:700 47px/64px Inter,sans-serif;color:#eee;height:64px}
h2 .i{font-style:italic;color:#2893fd}
input{display:block;box-sizing:border-box;width:1024px;height:110px;margin:67px 0 32px;border:0;border-radius:0;padding:0 20px;background:#fff;font:41.6px/48px "Liberation Sans",Arial,sans-serif}
input::placeholder{color:#757575;opacity:1}
.r{display:grid;grid-template-columns:1fr 1fr;gap:32px}
</style><h2><fit-text w="226">Message: </fit-text><fit-text class="i" w="255">Hello world</fit-text></h2><input placeholder="Enter new message"><div class="r"><dapp-button>Get New Message</dapp-button><dapp-button>Set Message</dapp-button></div>`);
make('side-widget',`<style>:host{position:absolute;right:0;top:176px;box-sizing:border-box;width:124px;height:80px;border:2px solid #fff;border-radius:40px 0 0 40px;background:#e9f1ff;box-shadow:0 0 32px rgba(255,255,255,.09);display:flex;align-items:center;padding-left:14px;gap:21px}</style><svg-icon name="widget" w="37" h="46" vb="0.500 0 37 46"></svg-icon><svg-icon name="trans" w="40" h="32" vb="0 0 40 32"></svg-icon>`);
make('dapp-page',`<style>
:host{display:flex;flex-direction:column;align-items:center;position:relative;height:1384px;width:2560px;background:#101010}
header{align-self:stretch;display:flex;justify-content:flex-end;padding:40px 40px 0 0}
header dapp-button{width:300px}
h1{margin:133px 0 100px;font:700 62px/87px Inter,sans-serif;color:#dfdfdf;height:87px}
</style><header><dapp-button>Connect Wallet</dapp-button></header><h1><fit-text w="726">Message Retrieval DApp</fit-text></h1><message-card></message-card><side-widget></side-widget>`);
make('browser-window',`<style>:host{display:flex;flex-direction:column;width:2560px;height:1600px;overflow:hidden}</style><slot name="tabs"></slot><slot name="toolbar"></slot><slot name="bookmarks"></slot><slot name="page"></slot>`);
</script>
</body>
</html>
